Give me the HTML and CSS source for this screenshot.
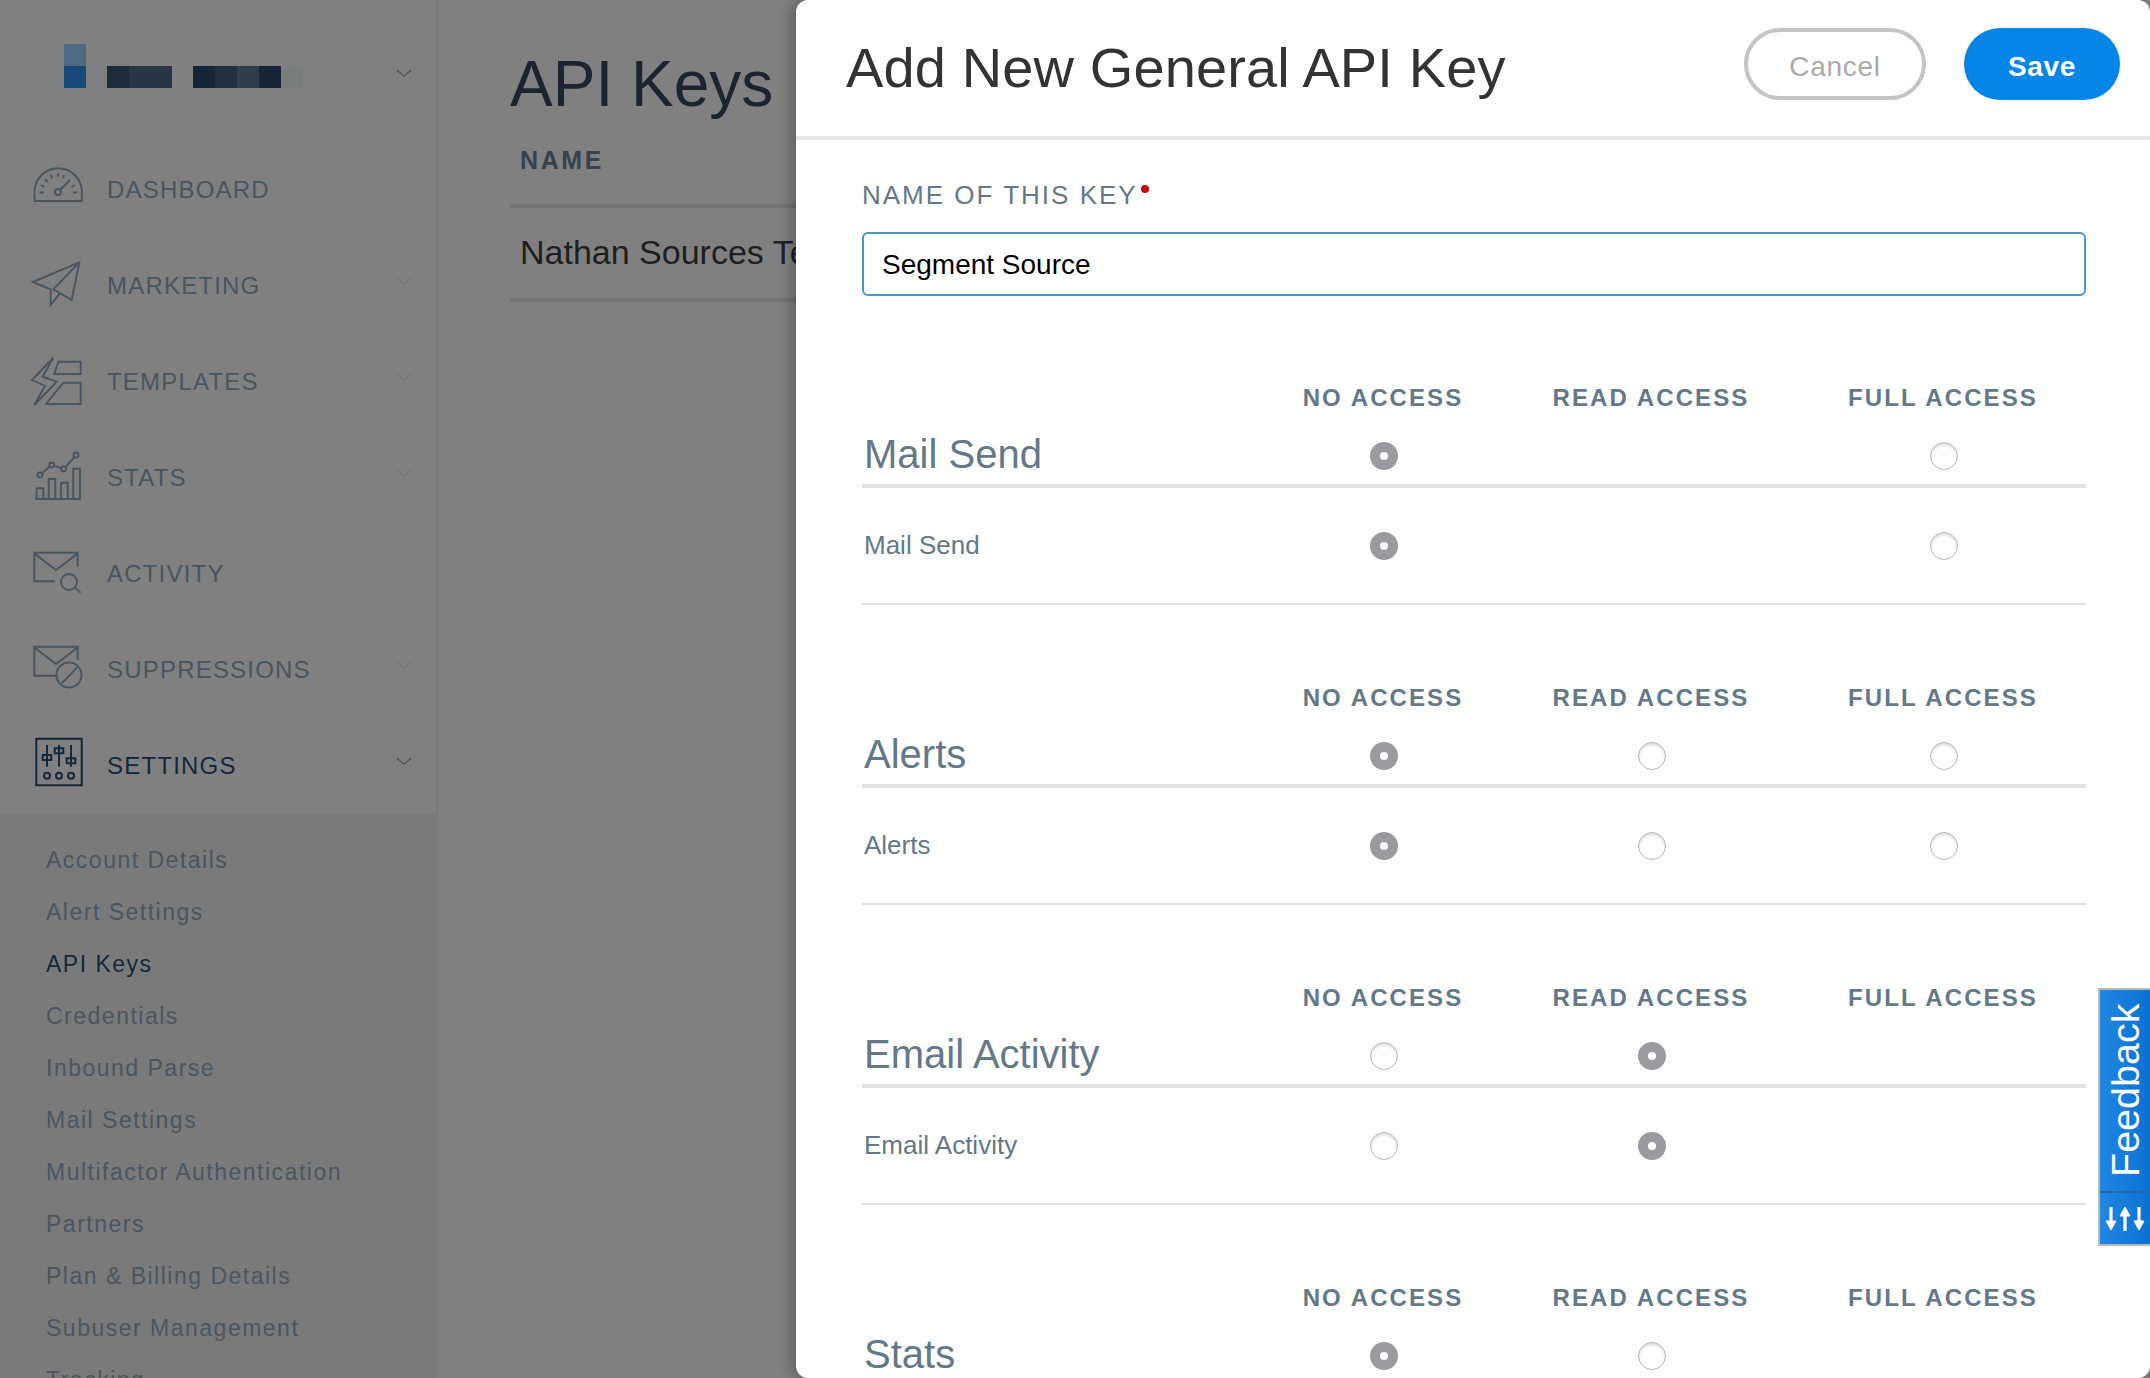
FILE: index.html
```html
<!DOCTYPE html>
<html lang="en">

<head>
  <meta charset="UTF-8">
  <title>API Keys</title>
  <link rel="stylesheet" href="styles.css">
</head>

<body>
  <div id="page">
    <aside id="sidebar">
      <div class="brand">
        <div class="logo">
          <span class="px logo-a"></span>
          <span class="px logo-b"></span>
        </div>
        <div class="blur-name">
          <span class="px wide n1"></span>
          <span class="px wider n2"></span>
          <span class="gap"></span>
          <span class="px n3"></span>
          <span class="px n4"></span>
          <span class="px n5"></span>
          <span class="px n6"></span>
          <span class="px n7"></span>
        </div>
        <svg class="chev dark" viewBox="0 0 18 10"><path d="M1 1l8 7 8-7"/></svg>
      </div>

      <ul class="nav">
        <li>
          <svg class="ico" viewBox="0 0 52 50"><path d="M2.5 37V28a23.7 23.7 0 0 1 47.4 0V37z"/><circle cx="26" cy="28" r="3"/><path d="M28 26l10-10M7.5 28.500h4M41 28.500h4M8.700 21l3.600 2M13 15l2.700 3M19 11l1 3.300M26 9.300v3.400M32 11l-1 3M43 21l-3.300 2"/></svg>
          <span>DASHBOARD</span>
        </li>
        <li>
          <svg class="ico" viewBox="0 0 52 50"><path d="M47.300 2.300L.7 22l18 7.300V45L28 33.300 39.700 40zM47.300 2.300L21.300 29.300 39.700 40"/></svg>
          <span>MARKETING</span>
          <svg class="chev" viewBox="0 0 18 10"><path d="M1 1l8 7 8-7"/></svg>
        </li>
        <li>
          <svg class="ico" viewBox="0 0 52 50"><path d="M21.300 1.700L0 24l13 6L2.300 49l22.400-23.300-14-5zM26.300 5.700h22.400V18H22.300zM31.300 26.700h17.400V48H14z"/></svg>
          <span>TEMPLATES</span>
          <svg class="chev" viewBox="0 0 18 10"><path d="M1 1l8 7 8-7"/></svg>
        </li>
        <li>
          <svg class="ico" viewBox="0 0 52 50"><path d="M3 47h45.700M4.700 47V36.300h6.600V47M16.700 47V27h6.600v20M29 47V30.700h6.700V47M41.300 47V16.700H48V47M10 21.500l7.700-7M22 13.800l7.500 2.400M33.500 15l9-10"/><circle cx="8" cy="23" r="2.500"/><circle cx="19.700" cy="13" r="2.500"/><circle cx="31.700" cy="17" r="2.500"/><circle cx="44" cy="3" r="2.500"/></svg>
          <span>STATS</span>
          <svg class="chev" viewBox="0 0 18 10"><path d="M1 1l8 7 8-7"/></svg>
        </li>
        <li>
          <svg class="ico" viewBox="0 0 52 50"><path d="M23 33.300H2.300V4.700h43.400v14M2.300 5.500L24 22 45.700 5.500"/><circle cx="37" cy="34" r="8"/><path d="M42.300 39.300l6.400 5.400"/></svg>
          <span>ACTIVITY</span>
        </li>
        <li>
          <svg class="ico" viewBox="0 0 52 50"><path d="M24.700 31.700H2.300V2.700h43.400V16M2.300 3.500L24 20 45.700 3.500"/><circle cx="37" cy="31" r="12.500"/><path d="M29.700 39.300l15.600-16"/></svg>
          <span>SUPPRESSIONS</span>
          <svg class="chev" viewBox="0 0 18 10"><path d="M1 1l8 7 8-7"/></svg>
        </li>
        <li class="active">
          <svg class="ico" viewBox="0 0 52 50"><path d="M4.300 -1.300h45.400v46.600H4.300zM15 5v21.700M27 5v21.700M39 5v21.700M10.700 15h8.600v5h-8.600zM22.700 8.300h8.600v5h-8.600zM34.700 18.300h8.600v5h-8.600z"/><circle cx="15" cy="35.700" r="3"/><circle cx="27" cy="35.700" r="3"/><circle cx="39" cy="35.700" r="3"/></svg>
          <span>SETTINGS</span>
          <svg class="chev dark" viewBox="0 0 18 10"><path d="M1 1l8 7 8-7"/></svg>
        </li>
      </ul>

      <ul class="subnav">
        <li>Account Details</li>
        <li>Alert Settings</li>
        <li class="current">API Keys</li>
        <li>Credentials</li>
        <li>Inbound Parse</li>
        <li>Mail Settings</li>
        <li>Multifactor Authentication</li>
        <li>Partners</li>
        <li>Plan &amp; Billing Details</li>
        <li>Subuser Management</li>
        <li>Tracking</li>
      </ul>
    </aside>

    <main id="content">
      <h1>API Keys</h1>
      <div class="col-head">NAME</div>
      <div class="key-row">Nathan Sources Test</div>
    </main>
  </div>

  <div id="modal">
    <header class="modal-top">
      <h2>Add New General API Key</h2>
      <div class="actions">
        <button class="btn cancel">Cancel</button>
        <button class="btn save">Save</button>
      </div>
    </header>

    <form class="modal-body">
      <label class="key-label" for="keyName">NAME OF THIS KEY<i class="req"></i></label>
      <input type="text" id="keyName" value="Segment Source">

      <section class="scope">
        <div class="labels">
          <span></span><b>NO ACCESS</b><b>READ ACCESS</b><b>FULL ACCESS</b>
        </div>
        <div class="head">
          <h3>Mail Send</h3>
          <span class="radio on"></span><span></span><span class="radio"></span>
        </div>
        <div class="row">
          <span class="name">Mail Send</span>
          <span class="radio on"></span><span></span><span class="radio"></span>
        </div>
      </section>

      <section class="scope">
        <div class="labels">
          <span></span><b>NO ACCESS</b><b>READ ACCESS</b><b>FULL ACCESS</b>
        </div>
        <div class="head">
          <h3>Alerts</h3>
          <span class="radio on"></span><span class="radio"></span><span class="radio"></span>
        </div>
        <div class="row">
          <span class="name">Alerts</span>
          <span class="radio on"></span><span class="radio"></span><span class="radio"></span>
        </div>
      </section>

      <section class="scope">
        <div class="labels">
          <span></span><b>NO ACCESS</b><b>READ ACCESS</b><b>FULL ACCESS</b>
        </div>
        <div class="head">
          <h3>Email Activity</h3>
          <span class="radio"></span><span class="radio on"></span><span></span>
        </div>
        <div class="row">
          <span class="name">Email Activity</span>
          <span class="radio"></span><span class="radio on"></span><span></span>
        </div>
      </section>

      <section class="scope">
        <div class="labels">
          <span></span><b>NO ACCESS</b><b>READ ACCESS</b><b>FULL ACCESS</b>
        </div>
        <div class="head">
          <h3>Stats</h3>
          <span class="radio on"></span><span class="radio"></span><span></span>
        </div>
      </section>
    </form>
  </div>

  <div id="feedback">
    <span class="fb-text">Feedback</span>
    <svg class="fb-ico" viewBox="0 0 40 26"><path class="head-fill" d="M1 15h10l-5 9zM15 10h10l-5-9zM29 15h10l-5 9z"/><path d="M6 1v15M20 25V9M34 1v15"/></svg>
  </div>
</body>

</html>
```

FILE: styles.css
```css
* {
  box-sizing: border-box;
}
html, body {
  margin: 0;
  height: 100%;
  overflow: hidden;
}
body {
  font-family: "Liberation Sans", Arial, sans-serif;
  background: #808080;
}
ul {
  list-style: none;
  margin: 0;
  padding: 0;
}

#page {
  display: flex;
  height: 1378px;
}

/* sidebar */
#sidebar {
  width: 438px;
  flex: none;
  border-right: 2px solid #7a7a7a;
  overflow: hidden;
}
.brand {
  display: flex;
  align-items: flex-start;
  height: 141px;
  padding: 44px 24px 0 64px;
}
.logo {
  display: flex;
  flex-direction: column;
}
.px {
  display: block;
  width: 22px;
  height: 22px;
}
.logo-a { background: #4f6a85; }
.logo-b { background: #1a4a7b; }
.blur-name {
  display: flex;
  margin: 22px 0 0 21px;
}
.blur-name .wide { width: 22px; }
.blur-name .wider { width: 43px; }
.blur-name .gap { width: 21px; }
.n1 { background: #1e2b3a; }
.n2 { background: #2a3644; }
.n3 { background: #172636; }
.n4 { background: #212f3e; }
.n5 { background: #323d4a; }
.n6 { background: #162636; }
.n7 { background: #7b7d7d; }
.chev {
  width: 16px;
  height: 9px;
  fill: none;
  stroke: #6f767c;
  stroke-width: 1.4;
  margin-left: auto;
}
.chev.dark {
  stroke: #4a535c;
}
.brand .chev {
  margin-top: 25px;
}

.nav li {
  display: flex;
  align-items: center;
  height: 96px;
  padding: 0 24px 0 32px;
  color: #495560;
  font-size: 24px;
  letter-spacing: 1.2px;
}
.nav li span {
  padding-top: 2px;
}
.nav li.active {
  color: #14283b;
}
.nav li > .chev {
  margin-top: -7px;
}
.ico {
  width: 52px;
  height: 50px;
  flex: none;
  margin-right: 23px;
  overflow: visible;
  fill: none;
  stroke: #495560;
  stroke-width: 1.9;
}
.active .ico {
  stroke: #14283b;
  stroke-width: 2;
}

.subnav {
  background: #7a7a7a;
  margin-top: 1px;
  padding: 20px 0 0 46px;
  height: 565px;
}
.subnav li {
  height: 52px;
  line-height: 52px;
  color: #4a5662;
  font-size: 23px;
  letter-spacing: 1.5px;
}
.subnav .current {
  color: #14283b;
}

/* page behind the modal */
#content {
  flex: 1;
  padding: 48px 0 0 72px;
  white-space: nowrap;
  overflow: hidden;
}
#content h1 {
  margin: 0;
  font-size: 64px;
  font-weight: normal;
  line-height: 72px;
  color: #1c2430;
}
.col-head {
  margin-top: 26px;
  padding: 0 0 29px 10px;
  border-bottom: 4px solid #757575;
  font-size: 25px;
  font-weight: bold;
  letter-spacing: 2.6px;
  color: #36424d;
}
.key-row {
  height: 94px;
  padding: 0 0 0 10px;
  line-height: 88px;
  border-bottom: 4px solid #757575;
  font-size: 34px;
  color: #1d1f21;
}

/* modal */
#modal {
  position: absolute;
  top: 0;
  left: 796px;
  right: 0;
  height: 1378px;
  background: #fff;
  border-radius: 12px;
  box-shadow: -4px 0 14px rgba(0, 0, 0, 0.3);
  overflow: hidden;
}
.modal-top {
  display: flex;
  justify-content: space-between;
  align-items: center;
  height: 140px;
  padding: 0 30px 8px 50px;
  border-bottom: 4px solid #e4e4e4;
}
.modal-top h2 {
  margin: 0;
  padding-top: 6px;
  font-size: 56px;
  font-weight: normal;
  letter-spacing: 0.12px;
  color: #333;
}
.actions {
  display: flex;
  gap: 38px;
}
.btn {
  height: 72px;
  padding: 5px 0 0;
  border-radius: 36px;
  font-family: inherit;
  font-size: 28px;
  letter-spacing: 0.7px;
}
.cancel {
  width: 182px;
  background: #fff;
  border: 4px solid #c4c4c4;
  color: #aaa;
}
.save {
  width: 156px;
  background: #0585e8;
  border: 0;
  color: #fff;
  font-weight: bold;
}

.modal-body {
  display: block;
  padding: 40px 64px 0 66px;
}
.key-label {
  display: block;
  font-size: 26px;
  letter-spacing: 2px;
  line-height: 30px;
  color: #647887;
}
.req {
  display: inline-block;
  width: 8px;
  height: 8px;
  margin-left: 3px;
  border-radius: 50%;
  background: #c4000f;
  vertical-align: 11px;
}
#keyName {
  display: block;
  width: 100%;
  height: 64px;
  margin-top: 22px;
  padding: 2px 18px 0;
  border: 2px solid #429cbb;
  border-radius: 6px;
  font-family: inherit;
  font-size: 28px;
  color: #000;
}

.scope {
  margin-bottom: 72px;
}
#keyName + .scope {
  margin-top: 81px;
}
.labels, .head, .row {
  display: grid;
  grid-template-columns: 404px 236px 300px 284px;
  justify-items: center;
  align-items: center;
}
.labels {
  height: 40px;
  padding-top: 2px;
  font-size: 24px;
  letter-spacing: 2.1px;
  color: #647887;
}
.labels b {
  padding-right: 2px;
}
.head {
  height: 71px;
  padding-top: 11px;
  border-bottom: 4px solid #e2e2e2;
}
.head h3 {
  justify-self: start;
  margin: -4px 0 0 2px;
  font-size: 40px;
  font-weight: normal;
  color: #647887;
}
.row {
  height: 117px;
  border-bottom: 2px solid #e2e2e2;
}
.row .name {
  justify-self: start;
  margin-left: 2px;
  font-size: 26px;
  color: #647887;
}
.radio {
  display: block;
  width: 28px;
  height: 28px;
  border: 1px solid #b8b8b8;
  border-radius: 50%;
  background: #fff;
  box-shadow: inset 0 2px 3px rgba(0, 0, 0, 0.15);
}
.radio.on {
  border: 10px solid #9b9a9f;
  box-shadow: none;
}

/* feedback tab */
#feedback {
  position: absolute;
  top: 988px;
  right: 0;
  width: 52px;
  height: 258px;
  display: flex;
  flex-direction: column;
  align-items: center;
  background: linear-gradient(90deg, #2187e4, #0a72d2);
  border: 2px solid #b8b8b8;
  border-right: 0;
}
.fb-text {
  writing-mode: vertical-rl;
  transform: rotate(180deg);
  width: 100%;
  height: 203px;
  padding-top: 14px;
  font-size: 39.5px;
  line-height: 50px;
  color: #fff;
  border-top: 2px solid #1f68b4;
}
.fb-ico {
  width: 40px;
  height: 26px;
  margin-top: 13px;
  fill: none;
  stroke: #fff;
  stroke-width: 3.2;
}
.fb-ico .head-fill {
  fill: #fff;
  stroke-width: 1;
}
```
